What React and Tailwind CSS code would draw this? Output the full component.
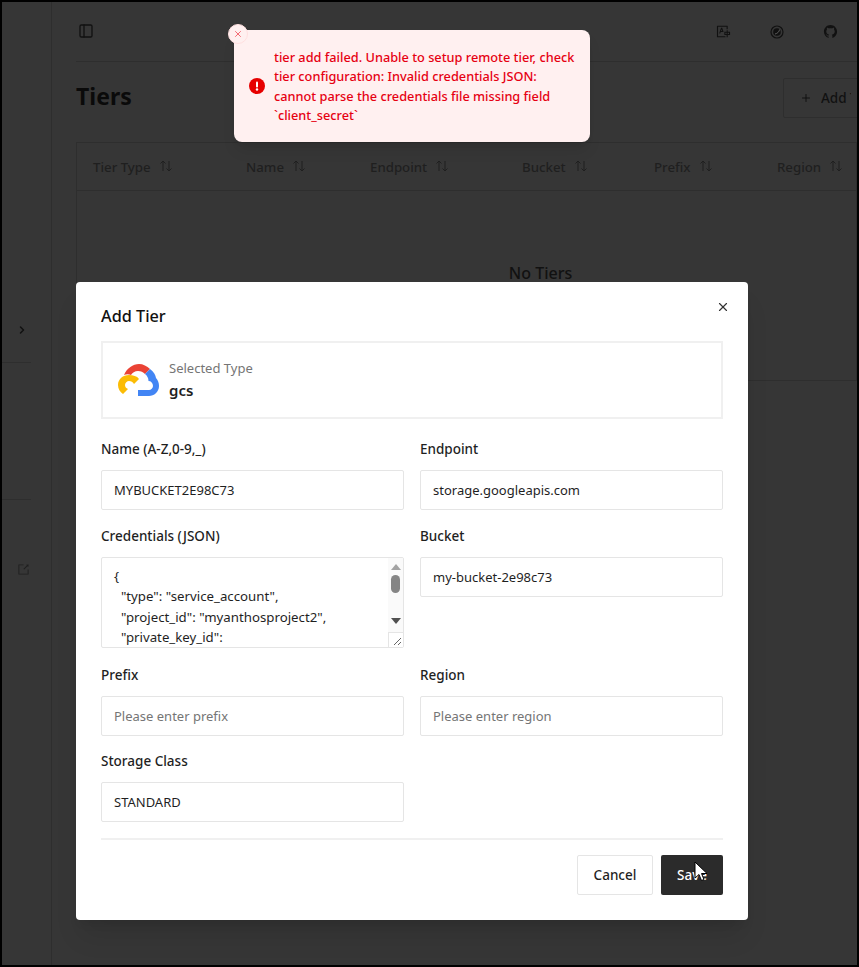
import { Plus, PanelLeft, ChevronRight, X } from "lucide-react";
import { AiOutlineTranslation, AiOutlineGithub, AiOutlineExport } from "react-icons/ai";

const columns = [
  { name: "Tier Type", w: "w-[153px]" },
  { name: "Name", w: "w-[124px]" },
  { name: "Endpoint", w: "w-[152px]" },
  { name: "Bucket", w: "w-[132px]" },
  { name: "Prefix", w: "w-[123px]" },
  { name: "Region", w: "w-[100px]" },
];

function SortIcon() {
  return (
    <svg width="14" height="12" viewBox="0 0 14 12" fill="none" stroke="#1f1f1f" strokeWidth="1" className="ml-[8px] -mt-[3px] shrink-0">
      <path d="M4 11V1M1.500 3.500L4 1l2.500 2.500M10 1v10M7.500 8.500L10 11l2.500-2.500" />
    </svg>
  );
}

function Field({ label, value, placeholder }) {
  return (
    <div className="flex flex-col">
      <label className="text-[13.5px] font-medium text-[#1f1f1f] leading-[18px] h-[20px]">{label}</label>
      <div className="mt-[10px] h-[40px] border border-[#e5e5e5] rounded-[2px] pl-3 pt-px flex items-center text-[13px]">
        {value ? <span className="text-[#1f1f1f]">{value}</span> : <span className="text-[#757575]">{placeholder}</span>}
      </div>
    </div>
  );
}

function GcsLogo() {
  return (
    <svg width="41" height="33" viewBox="0 0 41 33" fill="none" className="shrink-0">
      <path d="M6 11C9 4 15 0 21 0c4 0 8 2 11 5l-5 5c-2-2-4-3-7-3-3 0-6 2-7 4-2-1-5-1-7 0z" fill="#EA4335" />
      <path d="M32 5c4 3 5.500 6 6 9 2 2 3 5 3 8 0 6-5 10-10 10H20v-6h11c2 0 4-2 4-4 0-3-2-5-4.500-5 0-3-1.500-5.500-3.500-7z" fill="#4285F4" />
      <path d="M11 11C5 11 0 15 0 21c0 4 2 7 5 9l5-5c-2-1-3-2-3-4 0-2 2-4 4-4 2 0 4 1 5 3l5-5c-2-3-6-4-10-4z" fill="#FBBC05" />
    </svg>
  );
}

export default function App() {
  return (
    <div
      className="relative w-[859px] h-[967px] overflow-hidden border-2 border-black bg-[#363636] flex"
      style={{ fontFamily: '"Noto Sans", "Open Sans", sans-serif' }}
    >
      {/* sidebar */}
      <aside className="w-[50px] shrink-0 border-r border-[#2e2e2e] flex flex-col pt-[322px]">
        <ChevronRight size={12} strokeWidth={3} className="text-[#111] ml-[14px]" />
        <div className="mt-[26px] w-[29px] h-px bg-[#2e2e2e]" />
        <div className="mt-[136px] w-[29px] h-px bg-[#2e2e2e]" />
        <AiOutlineExport size={13} className="mt-[63px] ml-[15px] text-[#1f1f1f]" />
      </aside>

      {/* page behind the dialog */}
      <main className="flex-1 min-w-0 pl-[24px]">
        <header className="h-[60px] border-b border-[#2e2e2e] flex items-center justify-between pl-[2px]">
          <PanelLeft size={16} className="text-[#111] -mt-[1px]" />
          <div className="flex items-center gap-[39px] pr-[19px]">
            <AiOutlineTranslation size={15} className="text-[#111]" />
            <svg width="14" height="14" viewBox="0 0 14 14" className="text-[#111]">
              <circle cx="7" cy="7" r="6" fill="none" stroke="currentColor" strokeWidth="1.200" />
              <circle cx="7" cy="7" r="3.800" fill="currentColor" />
              <path d="M9.500 4.500C9.500 6.500 7.500 8.500 5 9" fill="none" stroke="#5a5a5a" strokeWidth="1" />
            </svg>
            <AiOutlineGithub size={15} className="text-[#111]" />
          </div>
        </header>

        <div className="h-[80px] flex items-start justify-between pt-[16px]">
          <h1 className="text-[23px] leading-[32px] font-bold text-[#0a0a0a] mt-[2px]">Tiers</h1>
          <div className="h-[40px] w-[78px] -mr-[4px] border border-[#2e2e2e] rounded-[2px] flex items-center pl-[16px] text-[13.5px] font-medium text-[#111] whitespace-nowrap overflow-hidden">
            <Plus size={12} strokeWidth={2} className="mr-[9px] shrink-0" />
            <span className="w-[30px] overflow-hidden">Add Tier</span>
          </div>
        </div>

        <section className="h-[239px] border border-[#2e2e2e] overflow-hidden">
          <div className="h-[48px] border-b border-[#2e2e2e] flex items-center pl-[16px] pt-[2px]">
            {columns.map((c) => (
              <div key={c.name} className={`${c.w} shrink-0 flex items-center text-[13.25px] font-medium text-[#1f1f1f]`}>
                {c.name}
                <SortIcon />
              </div>
            ))}
          </div>
          <div className="pt-[70px] text-center text-base font-medium text-[#111] pl-[148px]">No Tiers</div>
        </section>
      </main>

      {/* error toast */}
      <div className="absolute left-[232px] top-[28px] w-[356px] h-[112px] bg-[#fff0f0] rounded-[8px] flex items-center pl-[15px] pr-[10px] shadow-lg">
        <svg width="16" height="16" viewBox="0 0 16 16" className="shrink-0 mr-[9px]">
          <circle cx="8" cy="8" r="8" fill="#e60000" />
          <rect x="7" y="3.500" width="2" height="6" rx="1" fill="#fff" />
          <circle cx="8" cy="11.500" r="1.200" fill="#fff" />
        </svg>
        <p className="text-[12.750px] font-medium leading-[19.500px] text-[#e60012] whitespace-nowrap pt-[1px]">
          tier add failed. Unable to setup remote tier, check
          <br />
          tier configuration: Invalid credentials JSON:
          <br />
          cannot parse the credentials file missing field
          <br />
          `client_secret`
        </p>
        <div className="absolute -left-[6px] -top-[6px] w-[20px] h-[20px] rounded-full bg-[#fff0f0] border border-[#ffe0e0] flex items-center justify-center">
          <X size={10} className="text-[#f0505a]" />
        </div>
      </div>

      {/* dialog */}
      <div className="absolute left-[74px] top-[280px] w-[672px] h-[638px] bg-white rounded-[4px] shadow-xl px-[25px] pt-[22px]">
        <X size={14} className="absolute right-[18px] top-[18px] text-[#333]" />
        <h2 className="text-[16.250px] font-medium text-[#111] leading-[24px]">Add Tier</h2>
        <div className="mt-[13px] h-[78px] border-2 border-[#f0f0f0] flex items-center pl-[15px]">
          <GcsLogo />
          <div className="ml-[10px] flex flex-col">
            <span className="text-[13px] leading-[20px] text-[#757575]">Selected Type</span>
            <span className="text-[15px] font-semibold leading-[25px] text-[#1f1f1f]">gcs</span>
          </div>
        </div>

        <div className="mt-[20px] grid grid-cols-2 gap-x-4">
          <div className="mt-[1px]">
            <Field label="Name (A-Z,0-9,_)" value="MYBUCKET2E98C73" />
          </div>
          <div className="mt-[1px]">
            <Field label="Endpoint" value="storage.googleapis.com" />
          </div>

          <div className="mt-[17px] flex flex-col">
            <label className="text-[13.5px] font-medium text-[#1f1f1f] leading-[18px] h-[20px]">Credentials (JSON)</label>
            <div className="relative mt-[10px] h-[91px] border border-[#e5e5e5] rounded-[2px] overflow-hidden">
              <pre className="pl-3 pt-[8px] text-[13.25px] leading-[20.250px] text-[#1f1f1f]" style={{ fontFamily: "inherit" }}>
                {'{\n  "type": "service_account",\n  "project_id": "myanthosproject2",\n  "private_key_id":'}
              </pre>
              <div className="absolute right-0 top-0 bottom-0 w-[15px] bg-[#fafafa] flex flex-col items-center pt-[6px]">
                <div className="w-0 h-0 border-x-[5px] border-x-transparent border-b-[6px] border-b-[#a3a3a3]" />
                <div className="mt-[5px] w-[9px] h-[18px] rounded-full bg-[#858585]" />
                <div className="mt-[25px] w-0 h-0 border-x-[5px] border-x-transparent border-t-[6px] border-t-[#505050]" />
              </div>
              <div className="absolute right-0 bottom-0 w-[15px] h-[15px] bg-white border-l border-t border-[#e5e5e5]">
                <svg width="14" height="14" viewBox="0 0 14 14" stroke="#666" strokeWidth="1">
                  <path d="M12 5L5 12M12 9L9 12" />
                </svg>
              </div>
            </div>
          </div>
          <div className="mt-[17px]">
            <Field label="Bucket" value="my-bucket-2e98c73" />
          </div>

          <div className="mt-[18px]">
            <Field label="Prefix" placeholder="Please enter prefix" />
          </div>
          <div className="mt-[18px]">
            <Field label="Region" placeholder="Please enter region" />
          </div>

          <div className="mt-[16px]">
            <Field label="Storage Class" value="STANDARD" />
          </div>
        </div>

        <div className="mt-[16px] border-t-2 border-[#f0f0f0] pt-[15px] flex justify-end gap-2">
          <div className="w-[76px] h-[40px] pt-[1px] border border-[#e5e5e5] rounded-[2px] flex items-center justify-center text-[13.5px] font-medium text-[#1f1f1f]">Cancel</div>
          <div className="w-[62px] h-[40px] pt-[1px] bg-[#2b2b2b] rounded-[2px] flex items-center justify-center text-[13.5px] font-medium text-white">Save</div>
        </div>
      </div>

      {/* mouse cursor */}
      <svg width="14" height="22" viewBox="0 0 14 22" className="absolute left-[692px] top-[859px]">
        <path d="M1 1v16l4-3.500 2.500 6 2.500-1-2.500-6H13z" fill="#fff" stroke="#000" strokeWidth="1" />
      </svg>
    </div>
  );
}
